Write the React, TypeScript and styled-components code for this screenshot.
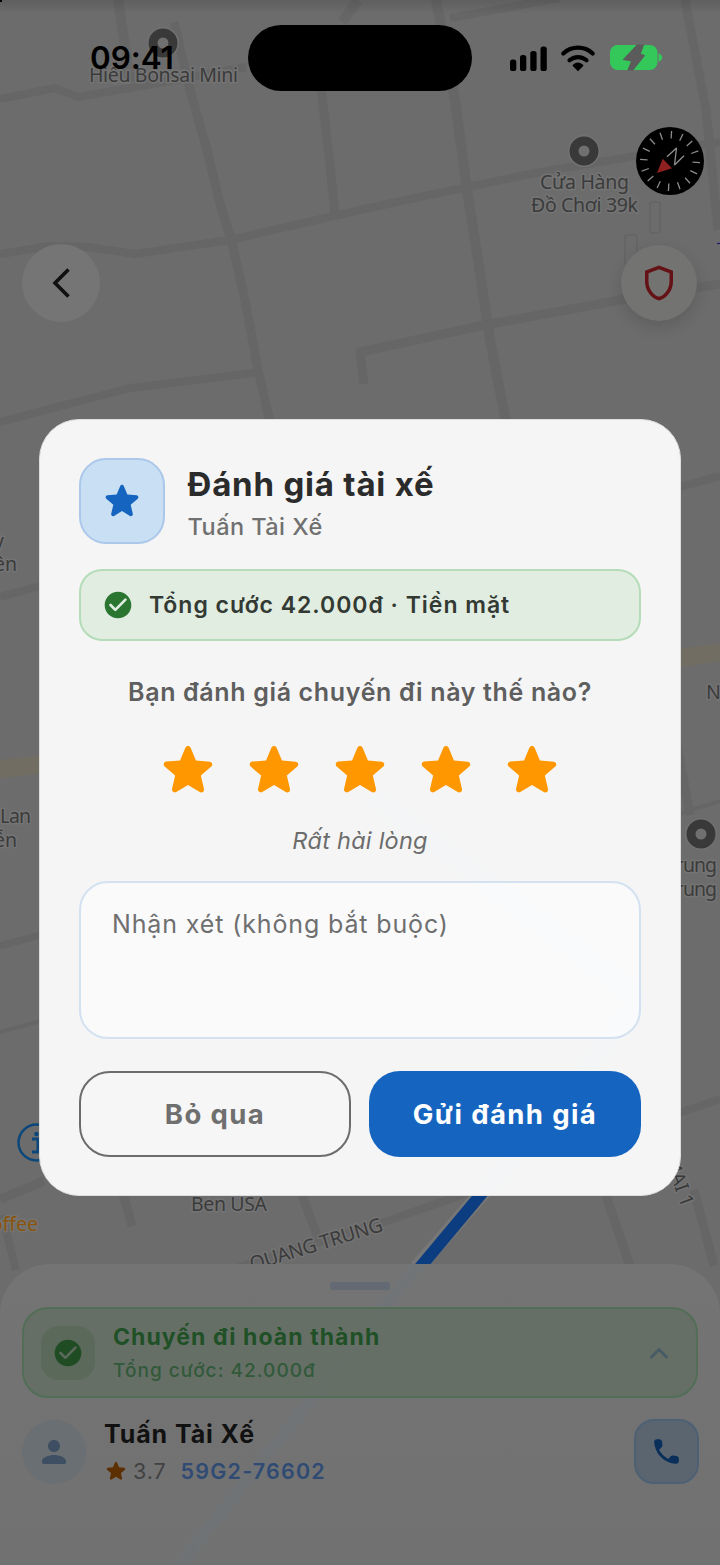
import React from "react";
import styled, { createGlobalStyle } from "styled-components";

const GlobalStyle = createGlobalStyle`
  * { box-sizing: border-box; }
  body { margin: 0; background: #6c6c6c; font-family: Inter, "Liberation Sans", sans-serif; }
  button { font: inherit; }
`;

/* ---------- page layers ---------- */

const Screen = styled.main`
  display: grid;
  grid-template: 1565px / 720px;
  width: 720px;
  height: 1565px;
  overflow: hidden;
`;

const Layer = styled.div`
  grid-area: 1 / 1;
  display: flex;
  flex-direction: column;
  min-width: 0;
`;

const MapCanvas = styled.svg`
  grid-area: 1 / 1;
  display: block;
  width: 720px;
  height: 1565px;
`;

/* ---------- status bar and map controls ---------- */

const StatusBar = styled.header`
  display: grid;
  grid-template-columns: 248px 224px 248px;
  height: 116px;
  padding-top: 25px;
  align-items: start;
`;

const Clock = styled.time`
  padding-left: 90px;
  line-height: 66px;
  font-size: 31.5px;
  font-weight: 600;
  letter-spacing: -0.1px;
  color: #000;
`;

const Island = styled.div`
  height: 66px;
  border-radius: 33px;
  background: #000;
`;

const StatusIcons = styled.svg`
  display: block;
  width: 248px;
  height: 66px;
`;

const CompassRow = styled.div`
  display: flex;
  justify-content: flex-end;
  height: 127px;
  padding: 11px 16px 0 0;
`;

const ControlRow = styled.div`
  display: flex;
  justify-content: space-between;
  align-items: center;
  padding: 0 23px 0 22px;
  height: 80px;
`;

const RoundButton = styled.button<{ $size: number; $raised?: boolean }>`
  display: grid;
  place-items: center;
  width: ${(p) => p.$size}px;
  height: ${(p) => p.$size}px;
  padding: 0;
  border: 0;
  border-radius: 50%;
  background: ${(p) => (p.$raised ? "#737371" : "#757575")};
  box-shadow: ${(p) => (p.$raised ? "0 6px 16px rgba(0, 0, 0, 0.13)" : "none")};
`;

/* ---------- trip sheet ---------- */

const Sheet = styled.section`
  margin-top: auto;
  height: 301px;
  padding: 18px 22px 0;
  border-radius: 50px 50px 0 0;
  background:
    linear-gradient(128.5deg, transparent 319px, rgba(106, 117, 128, 0.26) 325px 331px, transparent 337px),
    linear-gradient(#747474, #717171);
`;

const Handle = styled.div`
  width: 60px;
  height: 8px;
  margin: 0 auto 17px;
  border-radius: 3px;
  background: #636a74;
`;

const TripCard = styled.div`
  display: flex;
  align-items: center;
  height: 91px;
  padding: 0 27px 0 17px;
  border: 2px solid #536e57;
  border-radius: 26px;
  background: rgba(94, 108, 94, 0.6);
`;

const TripBadge = styled.div`
  display: grid;
  place-items: center;
  width: 54px;
  height: 54px;
  margin-right: 18px;
  border-radius: 18px;
  background: #5a695a;
`;

const Column = styled.div`
  display: flex;
  flex-direction: column;
  flex: 1;
  min-width: 0;
`;

const TripTitle = styled.strong`
  margin-top: 2px;
  line-height: 34px;
  font-size: 23px;
  font-weight: 700;
  letter-spacing: 1.06px;
  color: #205026;
`;

const TripFare = styled.span`
  line-height: 34px;
  font-size: 19px;
  font-weight: 500;
  letter-spacing: 1.04px;
  color: #31593a;
`;

const DriverRow = styled.div`
  display: flex;
  align-items: center;
  height: 65px;
  margin: 21px -1px 0 0;
`;

const Avatar = styled.div`
  display: grid;
  place-items: center;
  width: 64px;
  height: 64px;
  margin-right: 18px;
  border-radius: 50%;
  background: #6a6f74;
`;

const DriverName = styled.strong`
  margin-top: 2px;
  line-height: 37px;
  font-size: 25px;
  font-weight: 700;
  letter-spacing: 0.9px;
  color: #111;
`;

const DriverMeta = styled.div`
  display: flex;
  align-items: center;
  height: 37px;
  font-size: 21.5px;
  letter-spacing: 0.9px;
  color: #414141;

  & > svg { margin: 0 4px 0 -1px; }
`;

const Plate = styled.span`
  margin-left: 14px;
  font-weight: 600;
  letter-spacing: 1.2px;
  color: #2f4b74;
`;

const CallButton = styled.button`
  display: grid;
  place-items: center;
  width: 65px;
  height: 65px;
  padding: 0;
  border: 2px solid #4e6074;
  border-radius: 20px;
  background: #5a6570;
`;

/* ---------- rating dialog ---------- */

const DialogLayer = styled(Layer)`
  align-items: center;
  padding-top: 419px;
`;

const Dialog = styled.section`
  width: 642px;
  height: 777px;
  padding: 38px 39px 0;
  border: 1.5px solid #dedede;
  border-radius: 40px;
  background:
    linear-gradient(to top right, transparent 46%, #f3f5f6 49% 51%, transparent 54%) 330px 374px / 272px 206px no-repeat,
    linear-gradient(to bottom right, transparent 45%, #f3f5f6 48.5% 51.5%, transparent 55%) 442px 580px / 160px 196px no-repeat,
    #f5f5f5;
`;

const DialogHeader = styled.header`
  display: flex;
  height: 86px;
`;

const StarTile = styled.div`
  display: grid;
  place-items: center;
  width: 86px;
  height: 86px;
  margin-right: 22.5px;
  border: 2px solid #abc8ea;
  border-radius: 27px;
  background: #c9dff3;
`;

const DialogTitle = styled.h1`
  margin: 4px 0 0;
  line-height: 44px;
  font-size: 33px;
  font-weight: 700;
  letter-spacing: 0.8px;
  color: #2b2b2b;
`;

const DialogSubtitle = styled.span`
  margin-top: 1px;
  line-height: 40px;
  font-size: 23.5px;
  font-weight: 500;
  letter-spacing: 0.45px;
  color: #707070;
`;

const FareBanner = styled.div`
  display: flex;
  align-items: center;
  gap: 15px;
  height: 72px;
  margin-top: 25px;
  padding: 0 0 1px 21px;
  border: 2px solid #b5dcb9;
  border-radius: 23px;
  background: #e1ede1;
  font-size: 23px;
  font-weight: 600;
  letter-spacing: 0.98px;
  color: #333a33;
`;

const Question = styled.p`
  margin: 31px 0 0;
  line-height: 40px;
  text-align: center;
  font-size: 25px;
  font-weight: 600;
  letter-spacing: 0.65px;
  color: #5e5e5e;
`;

const Stars = styled.div`
  display: flex;
  justify-content: center;
  gap: 18px;
  margin-top: 24px;
  height: 68px;
`;

const RatingText = styled.p`
  margin: 17px 0 0;
  line-height: 40px;
  text-align: center;
  font-size: 23.5px;
  font-style: italic;
  letter-spacing: 0.25px;
  color: #6c6c6c;
`;

const CommentBox = styled.div`
  height: 158px;
  margin-top: 20px;
  padding: 23px 31px;
  border: 2px solid #d3e1f0;
  border-radius: 29px;
  background: rgba(252, 252, 253, 0.65);
  line-height: 36px;
  font-size: 25px;
  letter-spacing: 0.87px;
  color: #6f6f6f;
`;

const Actions = styled.div`
  display: grid;
  grid-template-columns: 1fr 1fr;
  gap: 18px;
  margin-top: 32px;
`;

const ActionButton = styled.button<{ $primary?: boolean }>`
  height: 86px;
  padding: 0;
  border: ${(p) => (p.$primary ? "0" : "2.5px solid #6c6c6c")};
  border-radius: 31px;
  background: ${(p) => (p.$primary ? "#1565c0" : "#f6f6f6")};
  color: ${(p) => (p.$primary ? "#fff" : "#6f6f6f")};
  font-size: 27.5px;
  font-weight: 700;
  letter-spacing: 1.4px;
`;

/* ---------- icons ---------- */

const Icon = styled.svg`
  display: block;
  flex: none;
`;

type GlyphProps = { size: number; color: string };

const StarIcon = ({ size, color }: GlyphProps) => (
  <Icon width={size} height={size} viewBox="0 0 24 24" fill={color}>
    <path d="M12 17.27l4.15 2.51c.76.46 1.69-.22 1.49-1.08l-1.1-4.72 3.67-3.18c.67-.58.31-1.68-.57-1.75l-4.83-.41-1.89-4.46c-.34-.81-1.5-.81-1.84 0L9.19 8.63l-4.83.41c-.88.07-1.24 1.17-.57 1.75l3.67 3.18-1.1 4.72c-.2.86.73 1.54 1.49 1.08l4.15-2.5z" />
  </Icon>
);

const CheckIcon = ({ size, color }: GlyphProps) => (
  <Icon width={size} height={size} viewBox="0 0 24 24" fill={color}>
    <path d="M12 2C6.48 2 2 6.48 2 12s4.48 10 10 10 10-4.48 10-10S17.52 2 12 2zM9.29 16.29 5.7 12.7a.996.996 0 1 1 1.41-1.41L10 14.17l6.88-6.88a.996.996 0 1 1 1.41 1.41l-7.59 7.59a.996.996 0 0 1-1.41 0z" />
  </Icon>
);

const ShieldIcon = () => (
  <Icon width={42} height={42} viewBox="0 0 24 24" fill="#641216">
    <path d="M12 2L4 5v6.09c0 5.05 3.41 9.76 8 10.91 4.59-1.15 8-5.86 8-10.91V5l-8-3zm6 9.09c0 4-2.55 7.7-6 8.83-3.45-1.13-6-4.82-6-8.83v-4.7l6-2.25 6 2.25v4.7z" />
  </Icon>
);

const BackIcon = () => (
  <Icon width={40} height={40} viewBox="0 0 40 40" fill="none" stroke="#101010" strokeWidth={3.6}>
    <path d="M27.500 6.500 14 20 27.500 33.500" />
  </Icon>
);

const PersonIcon = () => (
  <Icon width={36} height={36} viewBox="0 0 24 24" fill="#3e4f63">
    <path d="M12 12c2.210 0 4-1.790 4-4s-1.790-4-4-4-4 1.790-4 4 1.790 4 4 4zm0 2c-2.670 0-8 1.340-8 4v1c0 .55.45 1 1 1h14c.55 0 1-.45 1-1v-1c0-2.660-5.330-4-8-4z" />
  </Icon>
);

const PhoneIcon = () => (
  <Icon width={33} height={33} viewBox="0 0 24 24" fill="#0a2f5a">
    <path d="M19.230 15.260l-2.540-.29c-.61-.07-1.210.14-1.640.57l-1.840 1.840c-2.830-1.440-5.150-3.750-6.590-6.590l1.850-1.850c.43-.43.64-1.030.57-1.640l-.29-2.520c-.12-1.010-.97-1.770-1.990-1.770H5.030c-1.130 0-2.070.94-2 2.070.53 8.540 7.360 15.360 15.890 15.890 1.130.07 2.070-.87 2.070-2v-1.730c.01-1.010-.75-1.860-1.760-1.980z" />
  </Icon>
);

const ChevronUpIcon = () => (
  <Icon width={20} height={20} viewBox="0 0 20 20" fill="none" stroke="#475a66" strokeWidth={3} strokeLinecap="round" strokeLinejoin="round">
    <path d="M2.500 14 10 6.500l7.500 7.500" />
  </Icon>
);

const Compass = () => (
  <Icon width={68} height={68} viewBox="-34 -34 68 68">
    <circle r={34} fill="#000" />
    {Array.from({ length: 16 }, (_, i) => (
      <line key={i} y1={-22.500} y2={-30} stroke="#8b8b8b" strokeWidth={1.300} transform={`rotate(${3 + i * 22.5})`} />
    ))}
    <path d="M-7.300-2.300 2 7.300-13 12z" fill="#8f2020" />
    <path d="M-3-4.300 6.500-13 4.500 4 14-5.300" fill="none" stroke="#909090" strokeWidth={1.300} strokeLinejoin="bevel" />
  </Icon>
);

/* ---------- map ---------- */

const roads = [
  { d: "M118 0 124 40 130 82", w: 10 },
  { d: "M174 22 190 90 207 150 219 200 232 243 245 300 258 370 270 422", w: 9 },
  { d: "M0 99 55 88 78 97 130 88 246 67", w: 8 },
  { d: "M321 88 330 165 335 214", w: 9 },
  { d: "M0 254 50 246 88 247 135 254 230 240 360 210 420 197 540 172 720 142", w: 8 },
  { d: "M436 0 455 100 467 190 478 260 490 340 506 422", w: 10 },
  { d: "M450 18 560 -2", w: 8 },
  { d: "M0 422 130 388 262 372", w: 8 },
  { d: "M364 384 360 352 480 326 620 300 720 284", w: 9 },
  { d: "M685 0 706 110 718 230", w: 9 },
  { d: "M358 0 342 22", w: 10 },
  { d: "M676 488 720 476", w: 8 },
  { d: "M0 597 44 585", w: 8 },
  { d: "M676 740 690 815", w: 9 },
  { d: "M676 815 720 801", w: 4 },
  { d: "M0 946 44 934", w: 7 },
  { d: "M0 1032 44 1020", w: 4 },
  { d: "M676 1114 720 1099", w: 8 },
  { d: "M0 1199 44 1181", w: 9 },
  { d: "M122 1190 132 1226", w: 9 },
  { d: "M300 1190 318 1238", w: 9 },
  { d: "M604 1190 630 1266", w: 9 },
  { d: "M694 1190 714 1266", w: 9 },
  { d: "M230 1270 390 1220 476 1190", w: 8 },
  { d: "M2 1215 16 1270", w: 8 },
];

const MapBackground = () => (
  <MapCanvas viewBox="0 0 720 1565">
    <defs>
      <linearGradient id="topShade" x1="0" y1="0" x2="0" y2="1">
        <stop offset="0" stopColor="#000" stopOpacity={0.12} />
        <stop offset="1" stopColor="#000" stopOpacity={0} />
      </linearGradient>
    </defs>
    <rect width={720} height={1565} fill="#6c6c6c" />
    <g fill="none" stroke="#666666" strokeLinejoin="round">
      {roads.map((r) => (
        <path key={r.d} d={r.d} strokeWidth={r.w} />
      ))}
    </g>
    <g fill="none" stroke="#646464" strokeWidth={1.500}>
      <rect x={650} y={202} width={10} height={31} rx={2} />
      <rect x={625} y={235} width={12} height={30} rx={3} />
    </g>
    <g stroke="#726d62" strokeWidth={18}>
      <path d="M676 659 720 652" />
      <path d="M0 769 44 764" />
    </g>
    <rect width={720} height={14} fill="url(#topShade)" />
    <rect width={2} height={2} fill="#000" />
    <path d="M717 243.500h3" stroke="#1c1c6c" strokeWidth={1.200} />

    <path d="M496 1177 417 1268" stroke="#777777" strokeWidth={16} />
    <path d="M498 1174 417 1271" stroke="#0b3d80" strokeWidth={12} />

    {[[163, 43], [584, 151], [701, 834]].map(([x, y]) => (
      <g key={x}>
        <circle cx={x} cy={y} r={16} fill="#727272" />
        <circle cx={x} cy={y} r={10} fill="#707070" stroke="#393939" strokeWidth={9} />
      </g>
    ))}

    <g
      fontFamily='"Noto Sans", "Open Sans", sans-serif'
      fontSize={19.500}
      fill="#3b3b3b"
      stroke="#747474"
      strokeWidth={3}
      paintOrder="stroke"
      strokeLinejoin="round"
    >
      <text x={89} y={82} textLength={149}>Hiếu Bonsai Mini</text>
      <text x={540} y={189} textLength={89}>Cửa Hàng</text>
      <text x={531} y={212} textLength={107}>Đồ Chơi 39k</text>
      <text x={4} y={548} textAnchor="end">ỳ</text>
      <text x={17} y={571} textAnchor="end">ên</text>
      <text x={0} y={823} textLength={31}>Lan</text>
      <text x={17} y={847} textAnchor="end">ễn</text>
      <text x={706} y={699}>N</text>
      <text x={676} y={872} textLength={41}>rung</text>
      <text x={676} y={896} textLength={41}>rung</text>
      <text x={191} y={1211} textLength={76}>Ben USA</text>
      <text x={38} y={1231} textAnchor="end" fill="#8a540c">offee</text>
      <text transform="translate(252 1271) rotate(-17)" textLength={138}>QUANG TRUNG</text>
      <text transform="translate(664 1159) rotate(70)" textLength={52}>MẠI 1</text>
    </g>

    <circle cx={36.500} cy={1142.500} r={18} fill="none" stroke="#0b477a" strokeWidth={2.500} />
    <path d="M32 1139h6v13m-6 0h12" fill="none" stroke="#0b477a" strokeWidth={3} />
    <circle cx={36.500} cy={1134} r={2.300} fill="#0b477a" />
  </MapCanvas>
);

const StatusGlyphs = () => (
  <StatusIcons viewBox="472 25 248 66">
    <g fill="#000">
      <rect x={510} y={59.500} width={6.300} height={11.500} rx={2.600} />
      <rect x={520} y={55} width={6.300} height={16} rx={2.600} />
      <rect x={530.300} y={51} width={6.300} height={20} rx={2.600} />
      <rect x={540.500} y={46.500} width={6.300} height={24.500} rx={2.600} />
    </g>
    <g fill="none" stroke="#000" strokeWidth={4.200} strokeLinecap="round">
      <path d="M563.300 53.500a21.500 21.500 0 0 1 29.400 0" />
      <path d="M569.500 60.300a12.700 12.700 0 0 1 17 0" />
    </g>
    <path d="M578 71.200 573 66.300a1.300 1.300 0 0 1 .2-1.900 7.700 7.700 0 0 1 9.600 0 1.300 1.300 0 0 1 .2 1.900z" fill="#000" />
    <rect x={610} y={45} width={47.500} height={25} rx={7.500} fill="#34c759" />
    <path d="M658.500 53.500c2.300.6 3.700 2.200 3.700 4s-1.400 3.600-3.700 4.300z" fill="#34c759" />
    <path d="M637 45 643.500 45 640.300 54 644.600 55.500 633 70 628 70 631.500 61 623.300 59.500z" fill="#5b5b5b" stroke="#5b5b5b" strokeWidth={1} strokeLinejoin="round" />
  </StatusIcons>
);

export default function App() {
  return (
    <>
      <GlobalStyle />
      <Screen>
        <MapBackground />

        <Layer>
          <StatusBar>
            <Clock>09:41</Clock>
            <Island />
            <StatusGlyphs />
          </StatusBar>
          <CompassRow>
            <Compass />
          </CompassRow>
          <ControlRow>
            <RoundButton $size={78} aria-label="Quay lại">
              <BackIcon />
            </RoundButton>
            <RoundButton $size={76} $raised aria-label="An toàn">
              <ShieldIcon />
            </RoundButton>
          </ControlRow>

          <Sheet>
            <Handle />
            <TripCard>
              <TripBadge>
                <CheckIcon size={32} color="#1f4c23" />
              </TripBadge>
              <Column>
                <TripTitle>Chuyến đi hoàn thành</TripTitle>
                <TripFare>Tổng cước: 42.000đ</TripFare>
              </Column>
              <ChevronUpIcon />
            </TripCard>
            <DriverRow>
              <Avatar>
                <PersonIcon />
              </Avatar>
              <Column>
                <DriverName>Tuấn Tài Xế</DriverName>
                <DriverMeta>
                  <StarIcon size={26} color="#5c3002" />
                  <span>3.7</span>
                  <Plate>59G2-76602</Plate>
                </DriverMeta>
              </Column>
              <CallButton aria-label="Gọi tài xế">
                <PhoneIcon />
              </CallButton>
            </DriverRow>
          </Sheet>
        </Layer>

        <DialogLayer>
          <Dialog>
            <DialogHeader>
              <StarTile>
                <StarIcon size={46} color="#1565c0" />
              </StarTile>
              <Column>
                <DialogTitle>Đánh giá tài xế</DialogTitle>
                <DialogSubtitle>Tuấn Tài Xế</DialogSubtitle>
              </Column>
            </DialogHeader>
            <FareBanner>
              <CheckIcon size={32} color="#2a7630" />
              Tổng cước 42.000đ · Tiền mặt
            </FareBanner>
            <Question>Bạn đánh giá chuyến đi này thế nào?</Question>
            <Stars>
              {[1, 2, 3, 4, 5].map((n) => (
                <StarIcon key={n} size={68} color="#ff9800" />
              ))}
            </Stars>
            <RatingText>Rất hài lòng</RatingText>
            <CommentBox>Nhận xét (không bắt buộc)</CommentBox>
            <Actions>
              <ActionButton>Bỏ qua</ActionButton>
              <ActionButton $primary>Gửi đánh giá</ActionButton>
            </Actions>
          </Dialog>
        </DialogLayer>
      </Screen>
    </>
  );
}
